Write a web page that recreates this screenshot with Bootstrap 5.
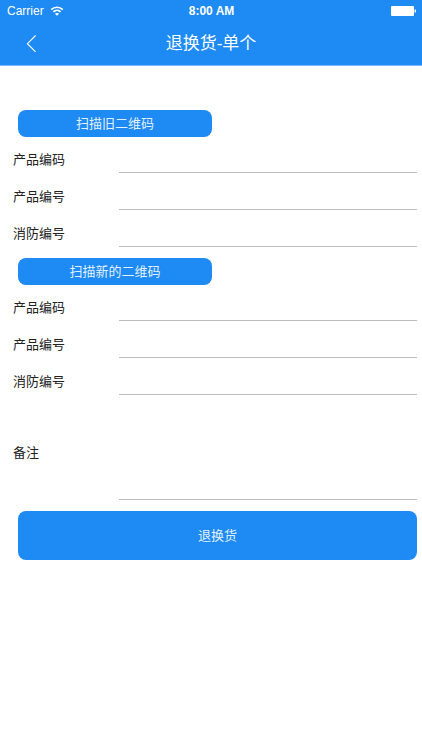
<!DOCTYPE html>
<html lang="zh-CN">
<head>
<meta charset="utf-8">
<meta name="viewport" content="width=device-width, initial-scale=1">
<title>退换货-单个</title>
<link href="https://cdn.jsdelivr.net/npm/bootstrap@5.3.0/dist/css/bootstrap.min.css" rel="stylesheet">
<style>
  body { font-family: "Liberation Sans", "Noto Sans CJK SC", sans-serif; font-size: 13px; color: #222; background: #fff; }
  .app-top { background: #1e8af3; color: #fff; border-bottom: 1px solid #7bbaf8; }
  .status-bar { height: 22px; padding: 0 6px; font-size: 12px; }
  .status-bar svg, .title-bar svg { display: block; }
  .carrier { gap: 6px; padding-left: 1px; }
  .title-bar { height: 43px; padding: 0 20px; }
  .title-bar h1 { font-size: 17px; line-height: 24px; font-weight: 400; }
  .back-btn { width: 24px; height: 24px; }
  .exchange-form { padding: 44px 5px 0 13px; }
  .blue-btn, .blue-btn:hover, .blue-btn:active { background: #1e8af3 !important; color: #e3f1ff !important; border: 0; border-radius: 8px; padding: 0; font-size: 13px; line-height: 20px; }
  .scan-btn { width: 48%; height: 27px; margin-left: 5px; }
  .field-list { gap: 1px; margin-bottom: 11px; }
  .field-row { height: 36px; }
  .field-row label { flex: 0 0 106px; line-height: 20px; margin-bottom: 3px; }
  .line-input { border: 0; border-bottom: 1px solid #bdbdbd; border-radius: 0; padding: 0 2px; font-size: 13px; background: transparent; resize: none; min-height: 0; min-width: 0; }
  .line-input:focus { box-shadow: none; border-color: #1e8af3; background: transparent; }
  .field-row .line-input { height: 28px; }
  .note-row { height: 94px; margin-bottom: 11px; }
  .note-row label { flex: 0 0 106px; line-height: 20px; }
  .note-row .line-input { height: 94px; }
  .submit-btn { height: 49px; margin-left: 5px; }
</style>
<script defer src="https://cdn.jsdelivr.net/npm/bootstrap@5.3.0/dist/js/bootstrap.bundle.min.js"></script>
</head>
<body>
<header class="app-top">
  <div class="status-bar row g-0 align-items-center">
    <div class="col d-flex align-items-center carrier">
      <span>Carrier</span>
      <svg width="14" height="10" viewBox="0 0 14 10" fill="none" stroke="#fff" stroke-width="1.7" aria-hidden="true">
        <path d="M1.2 3.7C4.5.4 9.500.4 12.800 3.700M3.400 5.900c2-2 5.200-2 7.200 0"/>
        <path d="M7 9.800 4.900 7.700c1.200-1.100 3-1.100 4.200 0z" fill="#fff" stroke="none"/>
      </svg>
    </div>
    <div class="col-auto fw-bold">8:00 AM</div>
    <div class="col d-flex justify-content-end">
      <svg width="26" height="10" viewBox="0 0 26 10" fill="#fff" aria-hidden="true">
        <rect x="1" width="23" height="10" rx="1"/><rect x="24.500" y="3.500" width="1.500" height="3" rx=".5"/>
      </svg>
    </div>
  </div>
  <nav class="title-bar row g-0 align-items-center" aria-label="标题栏">
    <div class="col">
      <button type="button" class="btn back-btn p-0 border-0" aria-label="返回">
        <svg width="24" height="24" viewBox="0 0 24 24" fill="none" stroke="#fff" stroke-width="1.1" aria-hidden="true"><path d="M15.600 3.500 7.400 11.700l8.200 8.200"/></svg>
      </button>
    </div>
    <h1 class="col-auto m-0">退换货-单个</h1>
    <div class="col"></div>
  </nav>
</header>
<main>
  <form class="exchange-form">
    <button type="button" class="btn blue-btn scan-btn d-block">扫描旧二维码</button>
    <div class="field-list d-flex flex-column">
      <div class="field-row d-flex align-items-end"><label for="oldCode">产品编码</label><input id="oldCode" type="text" class="form-control line-input"></div>
      <div class="field-row d-flex align-items-end"><label for="oldNo">产品编号</label><input id="oldNo" type="text" class="form-control line-input"></div>
      <div class="field-row d-flex align-items-end"><label for="oldFire">消防编号</label><input id="oldFire" type="text" class="form-control line-input"></div>
    </div>
    <button type="button" class="btn blue-btn scan-btn d-block">扫描新的二维码</button>
    <div class="field-list d-flex flex-column">
      <div class="field-row d-flex align-items-end"><label for="newCode">产品编码</label><input id="newCode" type="text" class="form-control line-input"></div>
      <div class="field-row d-flex align-items-end"><label for="newNo">产品编号</label><input id="newNo" type="text" class="form-control line-input"></div>
      <div class="field-row d-flex align-items-end"><label for="newFire">消防编号</label><input id="newFire" type="text" class="form-control line-input"></div>
    </div>
    <div class="note-row d-flex align-items-center"><label for="note">备注</label><textarea id="note" class="form-control line-input"></textarea></div>
    <div class="d-flex"><button type="submit" class="btn blue-btn submit-btn flex-grow-1">退换货</button></div>
  </form>
</main>
</body>
</html>
